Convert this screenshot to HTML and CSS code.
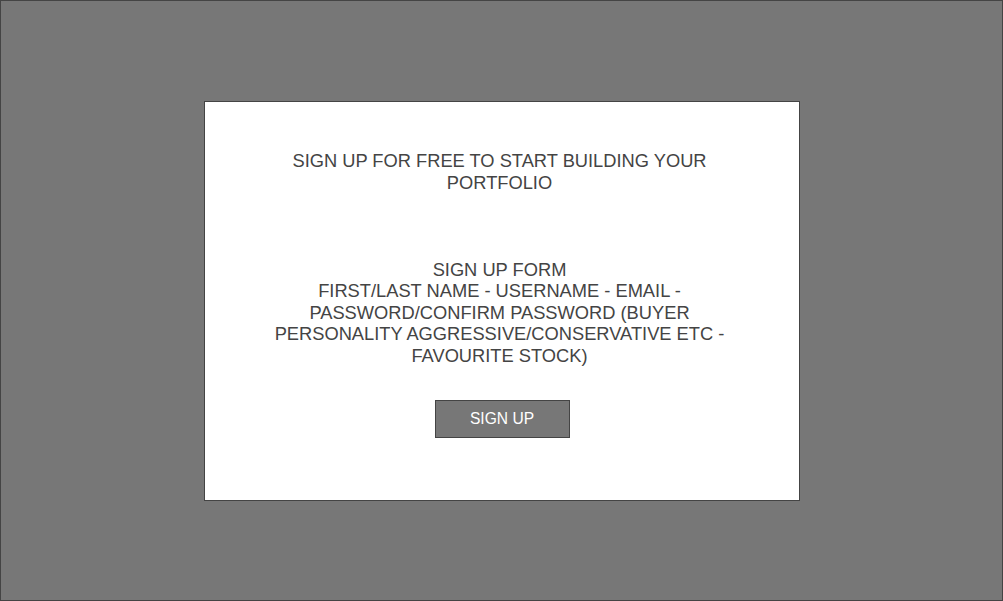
FILE: index.html
```html
<!DOCTYPE html>
<html lang="en">
<head>
<meta charset="utf-8">
<title>Sign up</title>
<link rel="stylesheet" href="styles.css">
</head>
<body>
<div class="screen">
  <div class="card">
    <p class="text">SIGN UP FOR FREE TO START BUILDING YOUR PORTFOLIO</p>
    <p class="text form-text">SIGN UP FORM<br>FIRST/LAST NAME - USERNAME - EMAIL - PASSWORD/CONFIRM PASSWORD (BUYER PERSONALITY AGGRESSIVE/CONSERVATIVE ETC - FAVOURITE STOCK)</p>
    <button class="btn" type="button">SIGN UP</button>
  </div>
</div>
</body>
</html>
```
FILE: styles.css
```css
html, body {
  margin: 0;
  padding: 0;
}
body {
  font-family: "Liberation Sans", Arial, sans-serif;
  font-size: 18.3px;
}
.screen {
  box-sizing: border-box;
  width: 1003px;
  height: 601px;
  background: #777777;
  border: 1px solid #444444;
  padding: 100px 0 0 203px;
}
.card {
  box-sizing: border-box;
  width: 596px;
  height: 400px;
  background: #ffffff;
  border: 1px solid #444444;
  padding: 48px 5px 0 0;
  display: flex;
  flex-direction: column;
  align-items: center;
}
.text {
  margin: 0;
  width: 470px;
  text-align: center;
  color: #444444;
  line-height: 21.6px;
}
.form-text {
  margin-top: 65.5px;
}
.btn {
  box-sizing: border-box;
  margin: 33.5px 0 0 5px;
  width: 135px;
  height: 38px;
  background: #777777;
  border: 1px solid #444444;
  color: #ffffff;
  font-family: "Liberation Sans", Arial, sans-serif;
  font-size: 15.6px;
  padding: 0;
}
```
